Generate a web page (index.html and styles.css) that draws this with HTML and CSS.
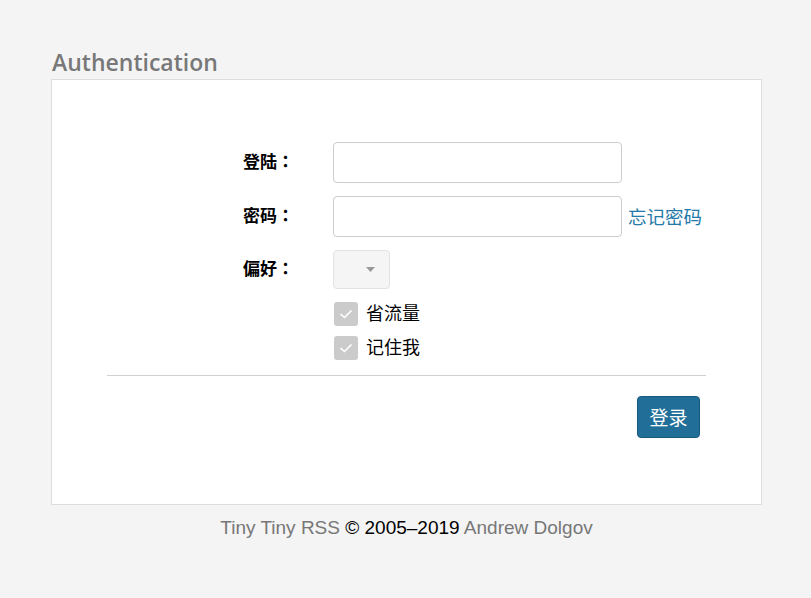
FILE: index.html
```html
<!DOCTYPE html>
<html>
<head>
<meta charset="utf-8">
<link rel="stylesheet" href="styles.css">
</head>
<body>
<div class="wrap">
  <h1 class="title">Authentication</h1>
  <div class="panel">
    <form class="form">
      <div class="row">
        <label class="lbl">登陆：</label>
        <div class="ctl"><input class="inp" type="text"></div>
      </div>
      <div class="row">
        <label class="lbl">密码：</label>
        <div class="ctl"><input class="inp" type="password"><a class="forgot" href="#">忘记密码</a></div>
      </div>
      <div class="row row-sel">
        <label class="lbl">偏好：</label>
        <div class="ctl">
          <div class="select"><svg width="9" height="5" viewBox="0 0 9 5"><path d="M0 0H9L4.5 5Z" fill="#999"/></svg></div>
        </div>
      </div>
      <div class="checks">
        <div class="chk"><span class="box"><svg width="14" height="10" viewBox="0 0 14 10"><path d="M1.5 5L5.5 8.5L12.5 1.5" fill="none" stroke="#fff" stroke-width="1.6"/></svg></span><span class="chk-text">省流量</span></div>
        <div class="chk"><span class="box"><svg width="14" height="10" viewBox="0 0 14 10"><path d="M1.5 5L5.5 8.5L12.5 1.5" fill="none" stroke="#fff" stroke-width="1.6"/></svg></span><span class="chk-text">记住我</span></div>
      </div>
      <hr class="sep">
      <div class="actions"><button class="btn" type="button">登录</button></div>
    </form>
  </div>
  <div class="footer"><a href="#">Tiny Tiny RSS</a> © 2005–2019 <a href="#">Andrew Dolgov</a></div>
</div>
</body>
</html>
```
FILE: styles.css
```css
html, body {
  margin: 0;
  padding: 0;
  background: #f4f4f4;
  font-family: "Noto Sans CJK SC", "Noto Sans", sans-serif;
  color: #000;
}
.wrap {
  width: 711px;
  margin: 0 auto 0 51px;
  padding-top: 47px;
}
.title {
  margin: 0 0 2px 1px;
  font-family: "Open Sans", sans-serif;
  font-weight: 600;
  font-size: 23px;
  line-height: 30px;
  color: #787878;
}
.panel {
  background: #fff;
  border: 1px solid #ddd;
  height: 424px;
  box-sizing: content-box;
}
.form {
  padding: 62px 55px 0 55px;
}
.row {
  display: flex;
  align-items: center;
  margin-bottom: 13px;
}
.row-sel { margin-bottom: 13px; }
.lbl {
  width: 187px;
  text-align: right;
  font-family: "Noto Sans CJK JP", "Noto Sans CJK SC", sans-serif;
  font-weight: bold;
  font-size: 17px;
  margin-right: 39px;
  padding-bottom: 4px;
}
.ctl {
  display: flex;
  align-items: center;
}
.inp {
  width: 289px;
  height: 41px;
  box-sizing: border-box;
  border: 1px solid #ccc;
  border-radius: 4px;
  background: #fff;
  margin: 0;
}
.forgot {
  margin-left: 6px;
  color: #257aa7;
  text-decoration: none;
  font-size: 18.5px;
  padding-bottom: 2px;
}
.select {
  width: 57px;
  height: 39px;
  box-sizing: border-box;
  border: 1px solid #e2e2e2;
  border-radius: 4px;
  background: #f5f5f5;
  display: flex;
  align-items: center;
  justify-content: flex-end;
  padding-right: 14px;
}
.checks {
  margin-left: 227px;
  display: flex;
  flex-direction: column;
  gap: 10px;
}
.chk {
  display: flex;
  align-items: center;
  height: 24px;
  font-size: 18px;
  line-height: 21px;
}
.chk-text {
  padding-bottom: 3px;
}
.box {
  width: 24px;
  height: 24px;
  background: #cbcbcb;
  border-radius: 3px;
  display: flex;
  align-items: center;
  justify-content: center;
  margin-right: 8px;
}
.sep {
  border: 0;
  border-top: 1px solid #d0d0d0;
  margin: 15px 0 0 0;
}
.actions {
  display: flex;
  justify-content: flex-end;
  padding: 20px 6px 0 0;
}
.btn {
  width: 63px;
  height: 42px;
  background: #216f98;
  border: 1px solid #185a7e;
  border-radius: 4px;
  color: #fff;
  font-family: "Noto Sans CJK SC", sans-serif;
  font-size: 19px;
  padding: 0 0 2px 0;
}
.footer {
  text-align: center;
  font-family: "Liberation Sans", Arial, sans-serif;
  font-size: 19px;
  line-height: 22px;
  padding-top: 12px;
  color: #000;
}
.footer a {
  color: #777;
  text-decoration: none;
}
```
